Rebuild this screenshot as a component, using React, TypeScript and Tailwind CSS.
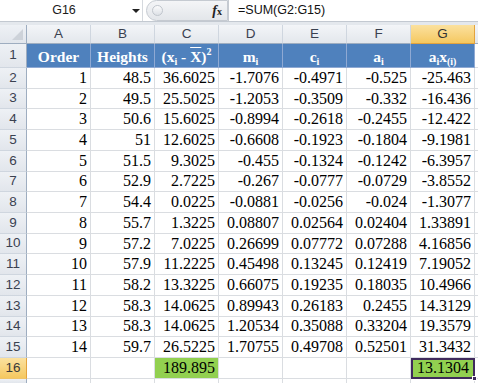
import type { ReactNode } from 'react'

const COLS = ['A', 'B', 'C', 'D', 'E', 'F', 'G']

const ROWS = [
  ['1', '48.5', '36.6025', '-1.7076', '-0.4971', '-0.525', '-25.463'],
  ['2', '49.5', '25.5025', '-1.2053', '-0.3509', '-0.332', '-16.436'],
  ['3', '50.6', '15.6025', '-0.8994', '-0.2618', '-0.2455', '-12.422'],
  ['4', '51', '12.6025', '-0.6608', '-0.1923', '-0.1804', '-9.1981'],
  ['5', '51.5', '9.3025', '-0.455', '-0.1324', '-0.1242', '-6.3957'],
  ['6', '52.9', '2.7225', '-0.267', '-0.0777', '-0.0729', '-3.8552'],
  ['7', '54.4', '0.0225', '-0.0881', '-0.0256', '-0.024', '-1.3077'],
  ['8', '55.7', '1.3225', '0.08807', '0.02564', '0.02404', '1.33891'],
  ['9', '57.2', '7.0225', '0.26699', '0.07772', '0.07288', '4.16856'],
  ['10', '57.9', '11.2225', '0.45498', '0.13245', '0.12419', '7.19052'],
  ['11', '58.2', '13.3225', '0.66075', '0.19235', '0.18035', '10.4966'],
  ['12', '58.3', '14.0625', '0.89943', '0.26183', '0.2455', '14.3129'],
  ['13', '58.3', '14.0625', '1.20534', '0.35088', '0.33204', '19.3579'],
  ['14', '59.7', '26.5225', '1.70755', '0.49708', '0.52501', '31.3432'],
]

const Sub = ({ children }: { children: ReactNode }) => (
  <sub className="text-[10px] relative top-[3px] align-baseline">{children}</sub>
)

const HEADERS: ReactNode[] = [
  'Order',
  'Heights',
  <>
    (x<Sub>i</Sub> - <span className="overline">X</span>)<sup className="text-[10px] relative -top-[7px] align-baseline">2</sup>
  </>,
  <>m<Sub>i</Sub></>,
  <>c<Sub>i</Sub></>,
  <>a<Sub>i</Sub></>,
  <>a<Sub>i</Sub>x<Sub>(i)</Sub></>,
]

function RowHead({ n, active }: { n: number; active?: boolean }) {
  return (
    <div
      className={
        active
          ? "flex items-center justify-center border-r border-b border-r-[#e3a33d] border-b-[#f0c46a] bg-gradient-to-b from-[#fbe19e] to-[#f5c85f] text-[13.5px] text-[#3a3a3a] font-['Liberation_Sans',sans-serif]"
          : "flex items-center justify-center border-r border-b border-r-[#9eadc0] border-b-[#cfd6df] bg-gradient-to-b from-[#eef1f5] to-[#e2e6ec] text-[13.5px] text-[#3a4150] font-['Liberation_Sans',sans-serif]"
      }
    >
      {n}
    </div>
  )
}

function Cell({ children, fill }: { children?: ReactNode; fill?: boolean }) {
  return (
    <div
      className={`flex items-center justify-end pr-[3px] border-r border-b border-[#dadde1] text-[16px] text-black ${
        fill ? 'bg-[#92d050]' : 'bg-white'
      }`}
    >
      {children}
    </div>
  )
}

export default function App() {
  return (
    <div className="w-[478px] h-[383px] overflow-hidden flex flex-col bg-white font-['Liberation_Sans',sans-serif]">
      {/* formula bar */}
      <div className="h-[22px] flex items-stretch bg-white border-b border-[#c3c9d1]">
        <div className="w-[143px] relative flex items-center border-r border-[#d5d9de]">
          <span className="w-[128px] text-center text-[12.5px] text-[#1c1c1c]">G16</span>
          <span className="absolute left-[132px] top-[9px] w-0 h-0 border-l-[4px] border-r-[4px] border-t-[4px] border-l-transparent border-r-transparent border-t-[#222]" />
        </div>
        <div className="w-[82px] ml-[3px] flex items-center justify-between rounded-l-[11px] border border-[#c5cad1] bg-gradient-to-b from-[#f4f5f7] to-[#e3e6ea] pl-[5px] pr-[5px]">
          <span className="w-[11px] h-[11px] rounded-full border border-[#c0c5cc] bg-gradient-to-b from-[#fbfbfc] to-[#dde1e6]" />
          <span className="font-['Liberation_Serif',serif] italic font-bold text-[14px] text-[#222] leading-none">
            f<span className="text-[10px] not-italic">x</span>
          </span>
        </div>
        <div className="flex-1 flex items-center pl-[9px] border-l border-[#c5cad1] text-[12.5px] text-[#111]">
          =SUM(G2:G15)
        </div>
      </div>
      <div className="h-[3px] bg-[#e4e8ed]" />

      {/* sheet */}
      <div className="flex-1 grid grid-cols-[27px_repeat(7,64px)_1fr] grid-rows-[19px_24px_repeat(15,20.73px)_1fr] font-['Liberation_Serif',serif]">
        {/* corner + column headers */}
        <div className="relative border-r border-b border-r-[#9eadc0] border-b-[#9eadc0] bg-gradient-to-b from-[#eef1f5] to-[#e2e6ec]">
          <span className="absolute right-[3px] bottom-[3px] w-0 h-0 border-l-[11px] border-b-[11px] border-l-transparent border-b-[#cdd2d9]" />
        </div>
        {COLS.map(c => (
          <div
            key={c}
            className={
              c === 'G'
                ? "flex items-center justify-center border-r border-b border-r-[#e3a33d] border-b-[#e3a33d] bg-gradient-to-b from-[#fbe19e] to-[#f5c85f] text-[13.5px] text-[#333] font-['Liberation_Sans',sans-serif]"
                : "flex items-center justify-center border-r border-b border-r-[#cfd6df] border-b-[#9eadc0] bg-gradient-to-b from-[#f3f5f8] to-[#e3e7ec] text-[13.5px] text-[#3a4150] font-['Liberation_Sans',sans-serif]"
            }
          >
            {c}
          </div>
        ))}
        <div className="border-b border-b-[#9eadc0] bg-gradient-to-b from-[#f3f5f8] to-[#e3e7ec]" />

        {/* row 1: table headings */}
        <RowHead n={1} />
        {HEADERS.map((h, i) => (
          <div
            key={i}
            className="flex items-center justify-center pt-[2px] border-r border-b border-[#8fa9d3] bg-[#4f81bd] text-white font-bold text-[15.5px] leading-none"
          >
            <span>{h}</span>
          </div>
        ))}
        <div className="border-b border-[#dadde1]" />

        {ROWS.map((r, i) => (
          <div key={i} className="contents">
            <RowHead n={i + 2} />
            {r.map((v, j) => (
              <Cell key={j}>{v}</Cell>
            ))}
            <div className="border-b border-[#dadde1]" />
          </div>
        ))}

        {/* row 16: totals */}
        <RowHead n={16} active />
        <Cell />
        <Cell />
        <Cell fill>189.895</Cell>
        <Cell />
        <Cell />
        <Cell />
        <div className="relative flex items-center justify-end pr-[4px] bg-[#92d050] border-2 border-[#3f2a5c] text-[16px] text-black">
          13.1304
          <span className="absolute -right-[4px] -bottom-[4px] w-[5px] h-[5px] bg-[#3f2a5c] border border-white" />
        </div>
        <div className="border-b border-[#dadde1]" />

        {/* row 17 partial */}
        <div className="border-r border-r-[#9eadc0] bg-gradient-to-b from-[#eef1f5] to-[#e2e6ec]" />
        {COLS.map(c => (
          <div key={c} className="border-r border-[#dadde1]" />
        ))}
        <div />
      </div>
    </div>
  )
}
